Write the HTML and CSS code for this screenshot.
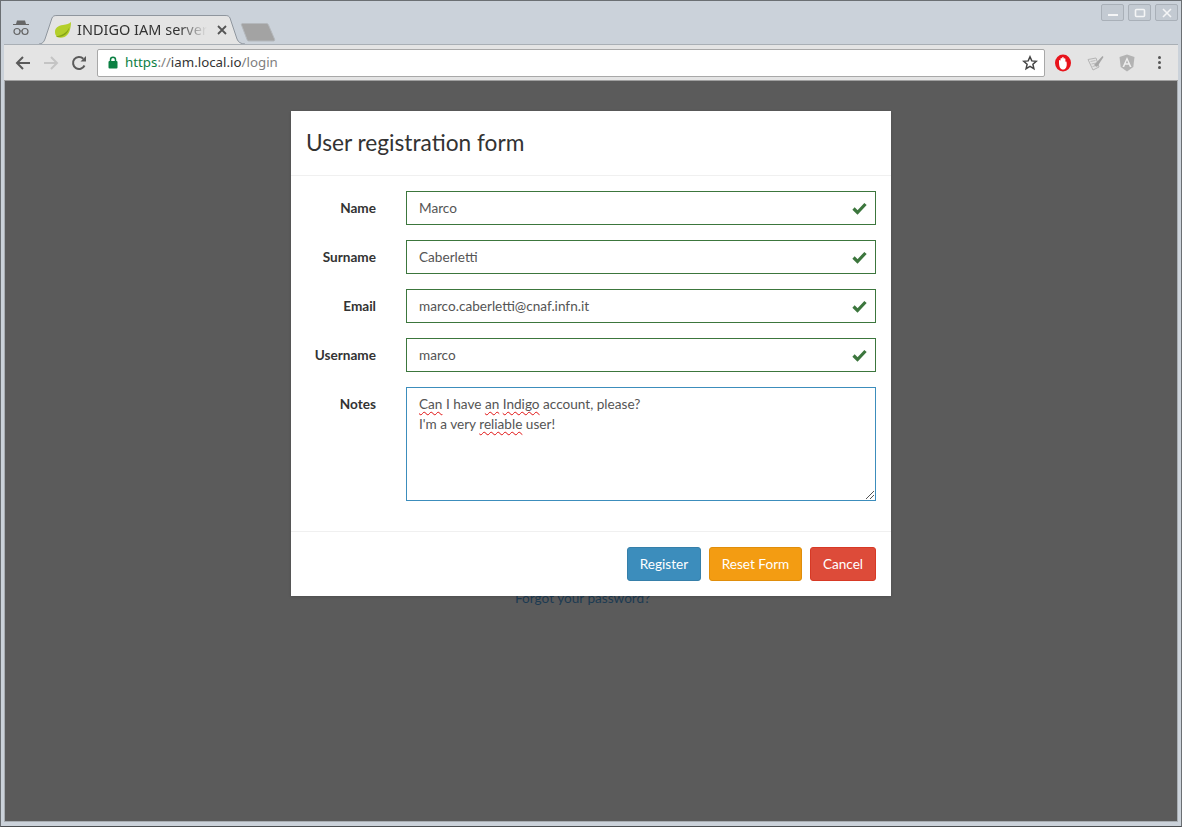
FILE: index.html
```html
<!DOCTYPE html>
<html lang="en">
<head>
    <meta charset="UTF-8">
    <meta name="viewport" content="width=device-width, initial-scale=1.0">
    <title>INDIGO IAM server</title>
    <link rel="stylesheet" href="styles.css">
</head>
<body>
    <div class="window">
        <div class="titlebar">
            <svg class="incognito" width="18" height="18" viewBox="0 0 18 18">
                <path d="M5 1.500h8l1 3.500h3v1H1V5h3z" fill="#666"/>
                <circle cx="5" cy="12.500" r="3" fill="none" stroke="#666" stroke-width="1.200"/>
                <circle cx="13" cy="12.500" r="3" fill="none" stroke="#666" stroke-width="1.200"/>
                <path d="M8 12h2" stroke="#666" stroke-width="1"/>
            </svg>
            <div class="tab">
                <svg class="tab-shape" width="206" height="29" viewBox="0 0 206 29">
                    <path d="M0 29C3 29 5 27 6 24L13 3C14 1 15 .5 18 .5H186C189 .5 190 1 191 3L198 24C199 27 202 29 206 29" fill="#e4e4e4" stroke="#8f969e"/>
                </svg>
                <svg class="favicon" width="18" height="16" viewBox="0 0 18 16">
                    <path d="M17 0C15 2 13 2.500 9 3 4 3.500 1 6 1 10c0 2 .8 3.500 2 5 2 1 5 1 7.500 0C15 13 17 7 17 0z" fill="#b4cf2a"/>
                    <path d="M2 14.500C7 13.500 13 11 15.500 5 14.500 11 10 15.500 3 15z" fill="#86a516"/>
                </svg>
                <span class="tab-title">INDIGO IAM server</span>
                <svg class="tab-close" width="10" height="10" viewBox="0 0 10 10">
                    <path d="M1 1l8 8M9 1l-8 8" stroke="#555" stroke-width="1.800"/>
                </svg>
            </div>
            <svg class="new-tab" width="36" height="20" viewBox="0 0 36 20">
                <path d="M3 1.500H26C27.500 1.500 28 2 28.500 3L34.500 17C35 18.500 34.500 19 33 19H9C8 19 7.500 18.500 7 17.500L1.500 3C1 2 1.800 1.500 3 1.500z" fill="#a3a3a3" stroke="#b4b8bc"/>
            </svg>
            <div class="win-controls">
                <div class="win-btn">
                    <svg width="12" height="10" viewBox="0 0 12 10"><path d="M1 7h10" stroke="#f4f5f6" stroke-width="2"/></svg>
                </div>
                <div class="win-btn">
                    <svg width="12" height="10" viewBox="0 0 12 10"><rect x="1.500" y="1.500" width="9" height="7" rx="1" fill="none" stroke="#f4f5f6" stroke-width="1.600"/></svg>
                </div>
                <div class="win-btn">
                    <svg width="12" height="10" viewBox="0 0 12 10"><path d="M2 1l8 8M10 1l-8 8" stroke="#f4f5f6" stroke-width="1.600"/></svg>
                </div>
            </div>
        </div>

        <div class="toolbar">
            <svg class="nav-icon" width="16" height="16" viewBox="0 0 16 16">
                <path d="M15 8H2M8 2L2 8l6 6" fill="none" stroke="#5a5a5a" stroke-width="2"/>
            </svg>
            <svg class="nav-icon" width="16" height="16" viewBox="0 0 16 16">
                <path d="M1 8h13M8 2l6 6-6 6" fill="none" stroke="#c4c4c4" stroke-width="2"/>
            </svg>
            <svg class="nav-icon" width="16" height="16" viewBox="0 0 16 16">
                <path d="M13.500 10.500A6 6 0 1 1 12.300 3.700" fill="none" stroke="#5a5a5a" stroke-width="2"/>
                <path d="M9.500 6.500H15V1z" fill="#5a5a5a"/>
            </svg>
            <div class="omnibox">
                <svg class="lock" width="10" height="13" viewBox="0 0 10 13">
                    <path d="M2.500 6V3.800a2.500 2.500 0 0 1 5 0V6" fill="none" stroke="#0b8043" stroke-width="1.500"/>
                    <rect x="0.500" y="5" width="9" height="7.500" rx="1" fill="#0b8043"/>
                </svg>
                <span class="url"><span class="url-scheme">https</span><span class="url-dim">://</span>iam.local.io<span class="url-dim">/login</span></span>
                <svg class="star" width="16" height="16" viewBox="0 0 16 16">
                    <path d="M8 1.800l1.800 4.100 4.500.4-3.400 3 1 4.400L8 11.400l-3.900 2.300 1-4.400-3.400-3 4.500-.4z" fill="none" stroke="#444" stroke-width="1.500"/>
                </svg>
            </div>
            <svg class="ext opera" width="18" height="18" viewBox="0 0 18 18">
                <ellipse cx="9" cy="9" rx="8" ry="8.500" fill="#e8141c"/>
                <path d="M5 8.500V6.800c0-1 1.300-1 1.500 0V5c0-1.200 1.400-1.200 1.600 0V4c0-1.200 1.500-1.200 1.700 0v1c.2-1 1.500-1 1.600 0v3c.4-.8 1.400-.5 1.200.4C13.200 12 12 15.500 9 15.500 6.500 15.500 5 13 5 8.500z" fill="#fff"/>
            </svg>
            <svg class="ext" width="18" height="18" viewBox="0 0 18 18">
                <path d="M1 5.500l8-1.500 3 9-6 3z" fill="#e2e2e2" stroke="#b5b5b5"/>
                <path d="M3.500 7.500l5-1M4.500 10l5-1M5.500 12.500l4-1" stroke="#bdbdbd"/>
                <path d="M7 11L15.500 2l1 1L10 13z" fill="#a6a6a6"/>
            </svg>
            <svg class="ext" width="16" height="18" viewBox="0 0 16 18">
                <path d="M8 .5L15.500 3l-1.200 10L8 17.500 1.700 13 .5 3z" fill="#b3b3b3"/>
                <path d="M8 3L3.500 13h1.700l.9-2.300h3.800l.9 2.300h1.700zM6.800 9.300L8 6.300l1.200 3z" fill="#eee"/>
            </svg>
            <div class="menu-dots"><i></i><i></i><i></i></div>
        </div>

        <div class="content">
            <a class="forgot" href="#">Forgot your password?</a>
            <div class="modal">
                <div class="modal-header">
                    <h3>User registration form</h3>
                </div>
                <form class="modal-body">
                    <div class="form-row">
                        <label>Name</label>
                        <div class="field valid">
                            <input type="text" value="Marco">
                            <svg class="check" width="15" height="13" viewBox="0 0 15 13"><path d="M1.500 6.500l4 4 8-8.500" fill="none" stroke="#3c763d" stroke-width="3.200"/></svg>
                        </div>
                    </div>
                    <div class="form-row">
                        <label>Surname</label>
                        <div class="field valid">
                            <input type="text" value="Caberletti">
                            <svg class="check" width="15" height="13" viewBox="0 0 15 13"><path d="M1.500 6.500l4 4 8-8.500" fill="none" stroke="#3c763d" stroke-width="3.200"/></svg>
                        </div>
                    </div>
                    <div class="form-row">
                        <label>Email</label>
                        <div class="field valid">
                            <input type="text" value="marco.caberletti@cnaf.infn.it">
                            <svg class="check" width="15" height="13" viewBox="0 0 15 13"><path d="M1.500 6.500l4 4 8-8.500" fill="none" stroke="#3c763d" stroke-width="3.200"/></svg>
                        </div>
                    </div>
                    <div class="form-row">
                        <label>Username</label>
                        <div class="field valid">
                            <input type="text" value="marco">
                            <svg class="check" width="15" height="13" viewBox="0 0 15 13"><path d="M1.500 6.500l4 4 8-8.500" fill="none" stroke="#3c763d" stroke-width="3.200"/></svg>
                        </div>
                    </div>
                    <div class="form-row">
                        <label>Notes</label>
                        <div class="notes">
                            <div><span class="typo">Can</span> I have <span class="typo">an</span> <span class="typo">Indigo</span> account, please?</div>
                            <div>I'm a very <span class="typo">reliable</span> user!</div>
                            <svg class="grip" width="8" height="8" viewBox="0 0 8 8">
                                <path d="M0 8l8-8M4 8l4-4" stroke="#555" stroke-width="1"/>
                            </svg>
                        </div>
                    </div>
                </form>
                <div class="modal-footer">
                    <button class="btn btn-primary" type="button">Register</button>
                    <button class="btn btn-warning" type="button">Reset Form</button>
                    <button class="btn btn-danger" type="button">Cancel</button>
                </div>
            </div>
        </div>
    </div>
</body>
</html>
```

FILE: styles.css
```css
* {
    box-sizing: border-box;
}

html, body {
    margin: 0;
    height: 100%;
    overflow: hidden;
}

body {
    font-family: "Lato", "Noto Sans", sans-serif;
    font-size: 13.6px;
    color: #444;
}

.window {
    height: 827px;
    display: flex;
    flex-direction: column;
    background: #cbd2da;
    border: 1px solid #6b6f73;
    border-bottom-color: #4a4d50;
    padding: 0 3px 4px;
}

/* title bar + tab strip */
.titlebar {
    height: 43px;
    flex: none;
    display: flex;
    align-items: flex-end;
    position: relative;
}

.incognito {
    margin: 0 0 7px 8px;
}

.tab {
    position: relative;
    width: 206px;
    height: 29px;
    margin-left: 9px;
    display: flex;
    align-items: center;
    padding-left: 15px;
}

.tab-shape {
    position: absolute;
    left: 0;
    top: 0;
}

.favicon,
.tab-title,
.tab-close {
    position: relative;
}

.tab-title {
    width: 130px;
    margin-left: 5px;
    padding-bottom: 2px;
    white-space: nowrap;
    overflow: hidden;
    font-family: "Noto Sans", sans-serif;
    font-size: 14.5px;
    color: #333;
    -webkit-mask-image: linear-gradient(to right, #000 78%, transparent);
    mask-image: linear-gradient(to right, #000 78%, transparent);
}

.tab-close {
    margin-left: 10px;
}

.new-tab {
    margin: 0 0 2px -5px;
}

.win-controls {
    margin-left: auto;
    align-self: flex-start;
    display: flex;
    gap: 4px;
    margin-top: 3px;
}

.win-btn {
    width: 23px;
    height: 17px;
    display: flex;
    align-items: center;
    justify-content: center;
    border: 1px solid #a9b0b8;
    border-radius: 2px;
    background: #c3cad2;
}

/* toolbar */
.toolbar {
    height: 37px;
    flex: none;
    display: flex;
    align-items: center;
    background: #e4e4e4;
    border-top: 1px solid #a9afb5;
    border-bottom: 1px solid #a0a0a0;
    padding: 0 0 0 11px;
}

.nav-icon {
    margin-right: 12px;
}

.nav-icon:nth-child(3) {
    margin-right: 10px;
}

.omnibox {
    width: 948px;
    height: 28px;
    flex: none;
    display: flex;
    align-items: center;
    background: #fff;
    border: 1px solid #a8a8a8;
    border-radius: 2px;
    padding: 0 6px 0 10px;
    font-family: "Noto Sans", sans-serif;
    font-size: 13.3px;
    color: #333;
}

.lock {
    margin-right: 7px;
}

.url {
    padding-bottom: 2px;
}

.url-scheme {
    color: #0b8043;
}

.url-dim {
    color: #808080;
}

.star {
    margin-left: auto;
}

.ext {
    flex: none;
    margin-left: 9px;
}

.opera {
    margin-left: 9px;
}

.ext + .ext {
    margin-left: 15px;
}

.ext + .ext + .ext {
    margin-left: 14px;
}

.menu-dots {
    margin-left: 23px;
    display: flex;
    flex-direction: column;
    gap: 2px;
}

.menu-dots i {
    width: 3px;
    height: 3px;
    background: #555;
    border-radius: 50%;
}

/* page behind the dialog, already dimmed */
.content {
    flex: 1;
    position: relative;
    background: #5b5b5b;
    border: 1px solid #a8adb2;
    border-top: 0;
    padding: 509px 0 0 510px;
}

.forgot {
    color: #1c3a52;
    text-decoration: none;
}

.modal {
    position: absolute;
    top: 30px;
    left: 286px;
    width: 600px;
    background: #fff;
    box-shadow: 0 1px 3px rgba(0, 0, 0, 0.15);
}

.modal-header {
    height: 65px;
    display: flex;
    align-items: center;
    padding: 0 15px 2px;
    border-bottom: 1px solid #f0f0f0;
}

.modal-header h3 {
    margin: 0;
    font-size: 22.7px;
    font-weight: 400;
    color: #333;
}

.modal-body {
    padding: 15px 15px 30px;
    display: flex;
    flex-direction: column;
    gap: 15px;
}

.form-row {
    display: flex;
    gap: 30px;
}

.form-row label {
    width: 70px;
    flex: none;
    padding-top: 9px;
    text-align: right;
    font-weight: 700;
    color: #333;
}

.field {
    position: relative;
    flex: 1;
}

.field input {
    display: block;
    width: 100%;
    height: 34px;
    padding: 0 40px 0 12px;
    border: 1px solid #3c763d;
    border-radius: 0;
    outline: none;
    font: inherit;
    color: #555;
    background: #fff;
}

.check {
    position: absolute;
    top: 11px;
    right: 9px;
}

.notes {
    position: relative;
    flex: 1;
    height: 114px;
    padding: 6px 12px;
    border: 1px solid #3c8dbc;
    line-height: 20px;
    color: #555;
}

.typo {
    text-decoration: underline wavy #e01010 1px;
    text-underline-offset: 2px;
}

.grip {
    position: absolute;
    right: 1px;
    bottom: 1px;
}

.modal-footer {
    display: flex;
    justify-content: flex-end;
    gap: 8px;
    padding: 15px;
    border-top: 1px solid #f0f0f0;
}

.btn {
    height: 34px;
    padding: 0;
    border: 1px solid;
    border-radius: 3px;
    font: inherit;
    color: #fff;
}

.btn-primary {
    width: 74px;
    background: #3c8dbc;
    border-color: #367fa9;
}

.btn-warning {
    width: 93px;
    background: #f39c12;
    border-color: #e08e0b;
}

.btn-danger {
    width: 66px;
    background: #dd4b39;
    border-color: #d73925;
}
```
